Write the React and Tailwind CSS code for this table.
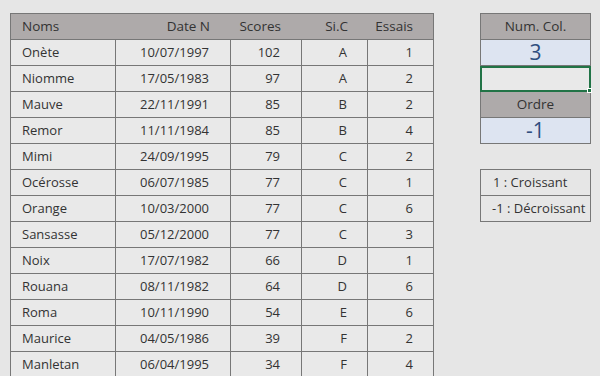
const rows = [
  ["Onète", "10/07/1997", 102, "A", 1],
  ["Niomme", "17/05/1983", 97, "A", 2],
  ["Mauve", "22/11/1991", 85, "B", 2],
  ["Remor", "11/11/1984", 85, "B", 4],
  ["Mimi", "24/09/1995", 79, "C", 2],
  ["Océrosse", "06/07/1985", 77, "C", 1],
  ["Orange", "10/03/2000", 77, "C", 6],
  ["Sansasse", "05/12/2000", 77, "C", 3],
  ["Noix", "17/07/1982", 66, "D", 1],
  ["Rouana", "08/11/1982", 64, "D", 6],
  ["Roma", "10/11/1990", 54, "E", 6],
  ["Maurice", "04/05/1986", 39, "F", 2],
  ["Manletan", "06/04/1995", 34, "F", 4],
];

const cols = "grid grid-cols-[105px_115px_71px_66px_66px]";

export default function App() {
  return (
    <div className="w-[600px] h-[376px] overflow-hidden bg-[#e6e6e6] font-['Open_Sans',sans-serif] text-[13px] text-[#333333] pt-[13px] pl-[10px] flex items-start">
      {/* data table */}
      <div className="w-[424px] border border-[#777777] border-b-0 shrink-0">
        <div className={`${cols} h-[26px] bg-[#aeaaaa] border-b border-[#777777] text-[13.5px]`}>
          <div className="flex items-center pl-[11px]">Noms</div>
          <div className="flex items-center justify-end pr-[21px]">Date N</div>
          <div className="flex items-center justify-end pr-[21px]">Scores</div>
          <div className="flex items-center justify-end pr-[20px]">Si.C</div>
          <div className="flex items-center justify-end pr-[21px]">Essais</div>
        </div>
        {rows.map((r, i) => (
          <div key={i} className={`${cols} h-[26px] bg-[#e9e9e9] border-b border-[#777777]`}>
            <div className="flex items-center pl-[11px] border-r border-[#777777]">{r[0]}</div>
            <div className="flex items-center justify-end pr-[21px] border-r border-[#777777]">{r[1]}</div>
            <div className="flex items-center justify-end pr-[21px] border-r border-[#777777]">{r[2]}</div>
            <div className="flex items-center justify-end pr-[20px] border-r border-[#777777]">{r[3]}</div>
            <div className="flex items-center justify-end pr-[21px]">{r[4]}</div>
          </div>
        ))}
      </div>

      {/* side panel */}
      <div className="ml-[46px] w-[111px] flex flex-col">
        <div className="border border-[#777777] border-b-0">
          <div className="h-[26px] bg-[#aeaaaa] border-b border-[#777777] flex items-center justify-center text-[13.5px]">Num. Col.</div>
          <div className="h-[26px] bg-[#dde4f1] border-b border-[#777777] flex items-center justify-center text-[21px] text-[#2f4e7f]">3</div>
          <div className="relative h-[26px] bg-[#e9e9e9] border-2 border-[#217346] -mx-px">
            <div className="absolute -right-[3px] -bottom-[3px] w-[5px] h-[5px] bg-[#217346] border border-white" />
          </div>
          <div className="h-[26px] bg-[#aeaaaa] border-b border-[#777777] flex items-center justify-center text-[13.5px]">Ordre</div>
          <div className="h-[26px] bg-[#dde4f1] border-b border-[#777777] flex items-center justify-center text-[21px] text-[#2f4e7f]">-1</div>
        </div>

        <div className="mt-[25px] border border-[#777777] border-b-0">
          <div className="h-[26px] border-b border-[#777777] flex items-center pl-[12px]">1 : Croissant</div>
          <div className="h-[26px] border-b border-[#777777] flex items-center pl-[11px]">-1 : Décroissant</div>
        </div>
      </div>
    </div>
  );
}
